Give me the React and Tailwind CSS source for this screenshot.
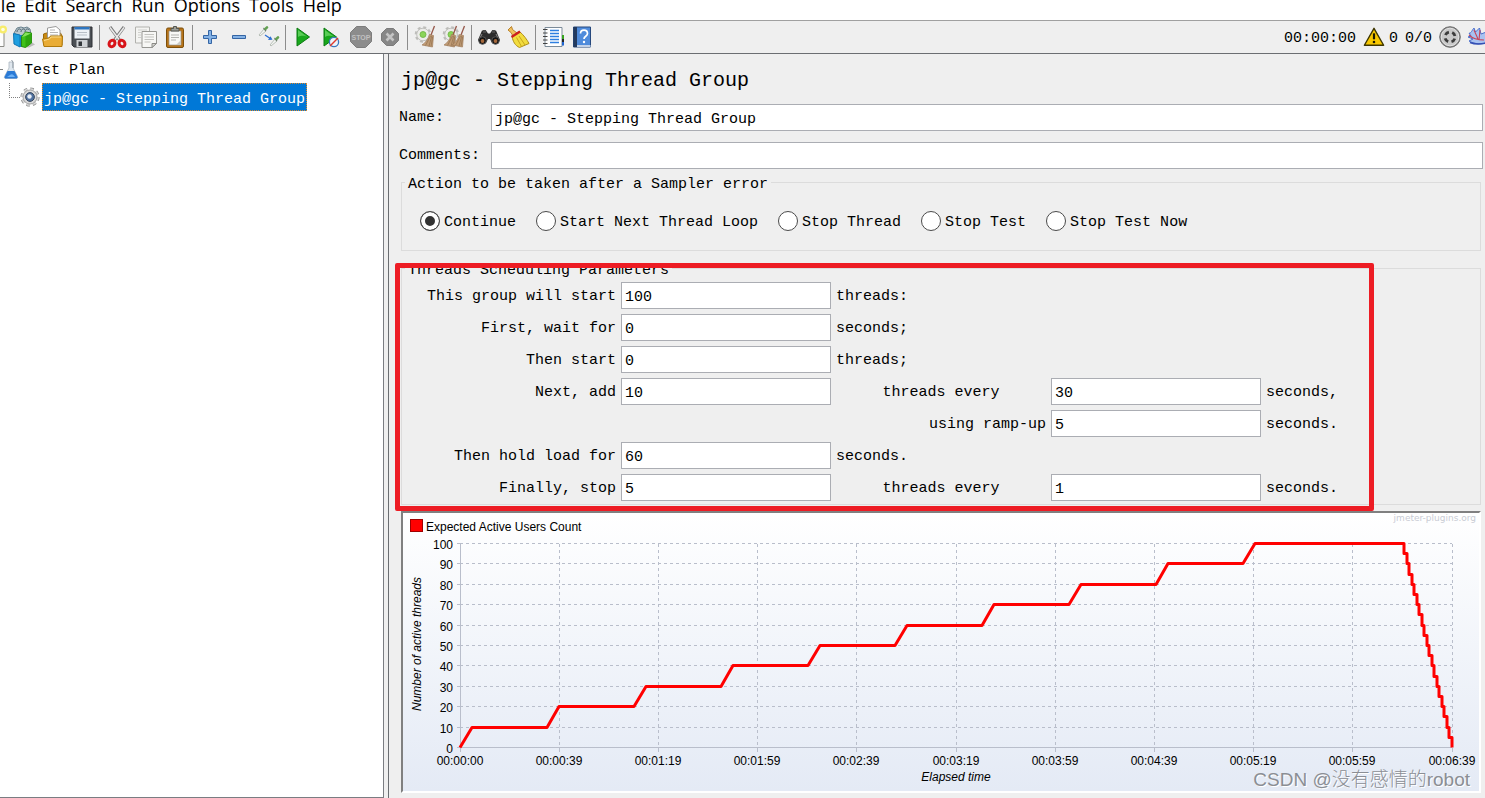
import React from "react";

const mono = "font-['Liberation_Mono',monospace]";

const MENUS = ["File", "Edit", "Search", "Run", "Options", "Tools", "Help"];

function Icon({ children, size = 24 }) {
  return (
    <svg width={size} height={size} viewBox="0 0 24 24" fill="none" aria-hidden="true">
      {children}
    </svg>
  );
}

const NewIcon = () => (
  <Icon>
    <path d="M3 2.500h18v19H3z" fill="#fdfdfd" stroke="#8b8b86" />
    <circle cx="20" cy="4.500" r="4" fill="#f7ec6b" />
    <circle cx="20" cy="4.500" r="1.800" fill="#fffde0" />
  </Icon>
);

const TemplatesIcon = () => (
  <Icon>
    <path d="M2 8 5 3l4-1 3 1 3-1 3 2 1 6-8 4z" fill="#b9c6cc" stroke="#68808c" />
    <path d="M5 7c0-3 3-4 4-2M9 7c0-3 3-4 4-2M13 7c0-3 3-4 4-2" stroke="#4c626e" />
    <path d="M1.500 8.500 8 10v12l-6-3z" fill="#1e9fe0" stroke="#0f75b4" />
    <path d="M8 10h3v12H8z" fill="#1583c4" />
    <path d="m18 16 5 3.500-6 3-4-.5z" fill="#8a8a8a" opacity=".5" />
    <path d="m9.500 11.500 4-4.500 6 1v10l-6 4.500-4-1z" fill="#3fc11a" stroke="#2a8a10" />
    <path d="m13.500 10.500 6-2.500v10l-6 4.500z" fill="#2da60f" />
    <path d="m10 12 3.500-4.500 5.500 1-5.500 2.500z" fill="#86e35e" />
  </Icon>
);

const OpenIcon = () => (
  <Icon>
    <path d="M2.500 20V9l3-1h14l1.500 3v9z" fill="#c98a12" stroke="#9c6a08" />
    <path d="M6.500 3 15 1.500 19 5v8H6.500z" fill="#fff" stroke="#9a9a9a" />
    <path d="M9 5h5M9 7.500h8M9 10h8" stroke="#b5b5b5" />
    <path d="M1.500 14 8 13l1.500-2h12L21 21.500H3z" fill="#e9ac35" stroke="#b07a0c" />
    <path d="M3 15.500 8.500 14l1.500-2h10" stroke="#fbdc8b" />
  </Icon>
);

const SaveIcon = () => (
  <Icon>
    <path d="M2 2h20v20H4l-2-2z" fill="#4b4f54" stroke="#2e3134" />
    <path d="M4.500 2.500h15v11h-15z" fill="#eef2f6" />
    <path d="M4.500 2h15v2.500h-15z" fill="#2e76c0" />
    <path d="M7 7.500h10M7 10h10" stroke="#b8bfc7" />
    <path d="M6.500 15h11v7h-11z" fill="#cfd2d5" />
    <path d="M8.500 16.500H12V21H8.500z" fill="#33373b" />
  </Icon>
);

const CutIcon = () => (
  <Icon>
    <path d="m5 2 9.500 13" stroke="#777" strokeWidth="3" />
    <path d="m19 2-9.500 13" stroke="#777" strokeWidth="3" />
    <path d="m5 2.500 9 12M19 2.500l-9 12" stroke="#e9e9e9" strokeWidth="1.500" />
    <ellipse cx="7" cy="18.500" rx="2.800" ry="3.300" stroke="#d81419" strokeWidth="3" transform="rotate(35 7 18.500)" />
    <ellipse cx="17" cy="18.500" rx="2.800" ry="3.300" stroke="#d81419" strokeWidth="3" transform="rotate(-35 17 18.500)" />
  </Icon>
);

const CopyIcon = () => (
  <Icon>
    <path d="M1.500 2h14v16h-14z" fill="#f4f4f2" stroke="#b1b1ad" />
    <path d="M4 5h9M4 7.500h3M4 10h3M4 12.500h3" stroke="#cfcfcc" />
    <path d="M8 6.500h14.500v12L18 22.500H8z" fill="#f7f7f5" stroke="#969692" />
    <path d="M10.500 9.500h9.500M10.500 12h9.500M10.500 14.500h9.500M10.500 17h6" stroke="#c3c3bf" />
    <path d="M22.500 18.500H18v4z" fill="#d6d6d2" stroke="#8b8b87" />
  </Icon>
);

const PasteIcon = () => (
  <Icon>
    <rect x="3.500" y="3" width="17" height="19.500" rx="1.500" fill="#b7741a" stroke="#7d4f0b" />
    <path d="M6 6h12v14H6z" fill="#f8f8f6" stroke="#9a9a92" strokeWidth=".7" />
    <path d="M8 10h8M8 12.500h8M8 15h5" stroke="#b4b4b0" />
    <path d="M18 15v5h-5z" fill="#c9c9c4" />
    <path d="M8 6V3.500h2.500V1.500h3v2H16V6z" fill="#9b9e98" stroke="#555753" />
  </Icon>
);

const PlusIcon = () => (
  <Icon>
    <path d="M10.500 5.500h3v5h5v3h-5v5h-3v-5h-5v-3h5z" fill="#84b2e6" stroke="#3465a4" />
  </Icon>
);

const MinusIcon = () => (
  <Icon>
    <path d="M5.500 10.500h13v3h-13z" fill="#84b2e6" stroke="#3465a4" />
  </Icon>
);

const Pipette = ({ x, y }) => (
  <g transform={`translate(${x} ${y})`}>
    <path d="m1 9 5-6 2 2-6 5z" fill="#f2f5f2" stroke="#a9b2a9" strokeWidth=".8" />
    <path d="m5.500 2 2.500 3" stroke="#6b7a6b" strokeWidth="1.200" />
    <path d="m7.500 2.800 1.500-1.500" stroke="#62a052" strokeWidth="2.600" strokeLinecap="round" />
  </g>
);

const ToggleIcon = () => (
  <Icon>
    <Pipette x={2} y={1} />
    <path d="m9 10 6 4" stroke="#2d6fd2" strokeWidth="1.300" />
    <path d="m16.500 14.800-4.500.2 2.500-3.700z" fill="#2d6fd2" />
    <Pipette x={13} y={11} />
  </Icon>
);

const StartIcon = () => (
  <Icon>
    <path d="M6 3v18l12.500-9z" fill="#18a81c" stroke="#0d7a12" />
    <path d="M7 5v7c4-2 7-1 9.500 0z" fill="#5acd57" />
  </Icon>
);

const StartNoPauseIcon = () => (
  <Icon>
    <path d="M4 3v18l12.500-9z" fill="#18a81c" stroke="#0d7a12" />
    <path d="M5 5v7c4-2 7-1 9.500 0z" fill="#5acd57" />
    <circle cx="14" cy="17" r="4.600" fill="#eef4fb" stroke="#3a78bf" strokeWidth="1.300" />
    <path d="m10 21 8-8" stroke="#e03a2c" strokeWidth="1.500" />
  </Icon>
);

const StopIcon = () => (
  <Icon>
    <path d="M7.500 1.500h9l6 6v9l-6 6h-9l-6-6v-9z" fill="#8c8c8c" stroke="#7c7c7c" />
    <text x="12" y="14.500" textAnchor="middle" fontSize="7" fontWeight="700" fill="#c0c0c0" fontFamily="Liberation Sans, sans-serif">
      STOP
    </text>
  </Icon>
);

const ShutdownIcon = () => (
  <Icon>
    <path d="M8.500 3.500h7l5 5v7l-5 5h-7l-5-5v-7z" fill="#878787" stroke="#7b7b7b" />
    <path d="m8.500 8.500 7 7m0-7-7 7" stroke="#c4c4c4" strokeWidth="2.600" />
  </Icon>
);

const Gear = ({ x, y }) => (
  <g transform={`translate(${x} ${y})`}>
    <circle r="7" stroke="#bdbdba" strokeWidth="2.600" strokeDasharray="2.900 2.600" />
    <circle r="6.300" fill="#ecece9" stroke="#c0c0bd" />
    <circle r="3" fill="#8ad458" stroke="#6bb33f" strokeWidth=".8" />
  </g>
);

const Broom = ({ x }) => (
  <g transform={`translate(${x} 0)`}>
    <path d="M12.500 1 9 10" stroke="#96584a" strokeWidth="1.300" />
    <path d="m7.500 9.500 4 1-1 11.500L0 20c4-2.500 6-6 7.500-10.500z" fill="#c09b75" stroke="#a07c5b" strokeWidth=".7" />
    <path d="M8.500 11 3.500 20.500M9.700 11 7 21.300M10.700 11.500 9 21.500" stroke="#8c6a47" strokeWidth=".6" />
  </g>
);

const ClearIcon = () => (
  <Icon>
    <Gear x={10} y={9.5} />
    <Broom x={9} />
  </Icon>
);

const ClearAllIcon = () => (
  <Icon>
    <Gear x={9} y={9.5} />
    <Broom x={2} />
    <Broom x={10} />
  </Icon>
);

const SearchIcon = () => (
  <Icon>
    <path d="M5 5.500h4l2 3h2l2-3h4l4 9.500-3 4-5-1-2-4h-2l-2 4-5 1-3-4z" fill="#2c2c2c" />
    <path d="M6 5h3v3H6zM15 5h3v3h-3z" fill="#4a4a4a" />
    <path d="m5 9-2 4M19 9l2 4" stroke="#8a8a8a" />
    <circle cx="5.500" cy="15.500" r="3.800" fill="#141414" stroke="#555" />
    <circle cx="18.500" cy="15.500" r="3.800" fill="#141414" stroke="#555" />
    <circle cx="5.500" cy="16" r="1.900" fill="#a5683c" />
    <circle cx="18.500" cy="16" r="1.900" fill="#a5683c" />
  </Icon>
);

const ResetSearchIcon = () => (
  <Icon>
    <path d="m2 5 3.500-3.500 1 3 4.500 3.500-4 3L5 7.500z" fill="#f0bf5e" stroke="#b9822a" />
    <path d="M6 11.500 13.500 6.500c4 3.500 7.500 8 9.500 12l-9.500 4c-4.500-2-6.500-6-7.500-11z" fill="#f2dc3e" stroke="#b0901a" />
    <path d="m10.500 12.500 5 9M13 11l6 9" stroke="#c9a61c" />
    <path d="m5.500 12 8.500-5.500" stroke="#cc1f1f" strokeWidth="2.400" />
  </Icon>
);

const LogIcon = () => (
  <Icon>
    <path d="M4 2.500h17v19H4z" fill="#fff" stroke="#7c8b99" />
    <path d="M9 5.500h9M9 8.500h9M9 11.500h9M9 14.500h9M9 17.500h9" stroke="#2e7fe0" strokeWidth="1.400" />
    <path d="M2 4.500h4.500M2 8h4.500M2 11.500h4.500M2 15h4.500M2 18.500h4.500" stroke="#444" />
    <path d="M21 10h2v4h-2z" fill="#37a51f" />
    <path d="M21 14h2v3h-2z" fill="#222" />
    <path d="M21 17h2v3.500h-2z" fill="#2166d1" />
  </Icon>
);

const HelpIcon = () => (
  <Icon>
    <path d="M3.500 2h17v20h-17z" fill="#4f8bdb" stroke="#26487c" />
    <path d="M3.500 2H7v20H3.500z" fill="#233a5e" />
    <path d="M7 20h13.500v2H7z" fill="#c3d2e8" />
    <path d="M10.500 8.500c0-4.500 7-4.500 7 0 0 3-3.500 2.500-3.500 5.500" stroke="#fff" strokeWidth="1.700" />
    <circle cx="14" cy="17" r="1.200" fill="#fff" />
  </Icon>
);

const WarningIcon = () => (
  <Icon size={22}>
    <path d="M12 2.500 22.500 21h-21z" fill="#f8c800" stroke="#3d3500" strokeWidth="1.500" strokeLinejoin="round" />
    <path d="M12 8v6.500" stroke="#1f1b00" strokeWidth="2.400" />
    <circle cx="12" cy="17.500" r="1.400" fill="#1f1b00" />
  </Icon>
);

const RemoteIcon = () => (
  <Icon>
    <circle cx="12" cy="12" r="10.300" fill="#8d8d8d" stroke="#6c6c6c" />
    <circle cx="12" cy="12" r="8.800" fill="#c9c9c9" stroke="#e3e3e3" />
    <circle cx="12" cy="12" r="5" stroke="#3c3c3c" strokeWidth="2.800" strokeDasharray="4.400 3.450" strokeDashoffset="-1.700" />
  </Icon>
);

const FeatherIcon = () => (
  <Icon>
    <path d="M3 8c2 1 3-3 5-5l1.500 4 4-4 1.500 6 8-3v11c-8 3-15 2-20-1l4-2-5-2 3-1z" fill="#a9c2f0" stroke="#4a6ecb" />
    <path d="M3 10c4 4 8 5 15 5M8 5l4 9M14 5l-1 10" stroke="#c8455a" strokeWidth="1.100" />
    <path d="M4 17.500c5 2 11 2 18 0" stroke="#3550b4" strokeWidth="1.600" />
  </Icon>
);

const FlaskIcon = () => (
  <svg width="16" height="20" viewBox="0 0 16 20" fill="none" aria-hidden="true">
    <path d="M6 3v6l-4.500 8.500c-.5 1 0 2 1.500 2h10c1.500 0 2-1 1.500-2L10 9V3z" fill="#dfe7ee" stroke="#a9b5bf" strokeWidth=".8" />
    <path d="M4.500 12h7l3 6c0 1-.5 1.500-1.500 1.500H3c-1 0-1.500-.5-1.500-1.500z" fill="#2a7ad6" />
    <path d="M7 16c2-2 4 0 5 2H4z" fill="#6cb0f5" />
    <path d="m8.500 1 1.500 2v6" stroke="#8e99a3" />
  </svg>
);

const ThreadGroupIcon = () => (
  <svg width="20" height="20" viewBox="0 0 20 20" fill="none" aria-hidden="true">
    <circle cx="10" cy="10" r="8.300" stroke="#8f8f8f" strokeWidth="2.600" strokeDasharray="3.500 3.020" />
    <circle cx="10" cy="10" r="8" stroke="#dcdcdc" strokeWidth="1.600" strokeDasharray="3 3.280" />
    <circle cx="10" cy="10" r="7" fill="#dadada" stroke="#a4a4a4" />
    <circle cx="10" cy="10" r="4.400" fill="#50719f" stroke="#39475c" />
    <circle cx="9.500" cy="9.500" r="2.200" fill="#e7eef7" />
  </svg>
);

const TOOLS = [
  ["New", NewIcon],
  ["Templates", TemplatesIcon],
  ["Open", OpenIcon],
  ["Save", SaveIcon],
  null,
  ["Cut", CutIcon],
  ["Copy", CopyIcon],
  ["Paste", PasteIcon],
  null,
  ["Expand all", PlusIcon],
  ["Collapse all", MinusIcon],
  ["Toggle", ToggleIcon],
  null,
  ["Start", StartIcon],
  ["Start no pauses", StartNoPauseIcon],
  ["Stop", StopIcon],
  ["Shutdown", ShutdownIcon],
  null,
  ["Clear", ClearIcon],
  ["Clear all", ClearAllIcon],
  null,
  ["Find", SearchIcon],
  ["Reset search", ResetSearchIcon],
  null,
  ["Function helper", LogIcon],
  ["Help", HelpIcon],
];

function Toolbar() {
  return (
    <div className="flex h-[34px] items-center justify-between overflow-hidden border-t border-b border-t-[#a0a0a0] border-b-[#6b6e72] bg-[#efefef]">
      <div className="-ml-[20px] flex items-center">
        {TOOLS.map((tool, i) => {
          if (!tool) {
            return (
              <span key={i} className="flex w-[6px] justify-center">
                <span className="h-[25px] w-px bg-[#8c8c8c]" />
              </span>
            );
          }
          const [label, Glyph] = tool;
          return (
            <button key={i} type="button" aria-label={label} className="flex w-[29px] justify-center">
              <Glyph />
            </button>
          );
        })}
      </div>
      <div className="-mr-[5px] flex items-center text-[15px] text-black">
        <span className="pt-1">00:00:00</span>
        <button type="button" aria-label="Show log" className="mr-1 ml-[7px]">
          <WarningIcon />
        </button>
        <span className="pt-1">0</span>
        <span className="mr-[6px] ml-[7px] pt-1">0/0</span>
        <RemoteIcon />
        <span className="ml-1">
          <FeatherIcon />
        </span>
      </div>
    </div>
  );
}

function Tree() {
  return (
    <aside className="w-[384px] shrink-0 border-r border-b border-[#7a7d82] bg-white pt-px text-[15px]">
      <ul>
        <li>
          <div className="flex h-[28px] items-center">
            <span className="mr-px w-[2px] border-t border-dotted border-[#808080]" />
            <FlaskIcon />
            <span className="ml-[5px] pt-[5px]">Test Plan</span>
          </div>
          <ul>
            <li className="flex h-[28px] items-center pl-[9px]">
              <span className="h-[15px] w-[11px] self-start border-b border-l border-dotted border-[#808080]" />
              <ThreadGroupIcon />
              <button
                type="button"
                className="ml-[2px] h-[28px] border border-dotted border-[#e08a2c] bg-[#0078d7] px-px pt-[5px] text-white"
              >
                jp@gc - Stepping Thread Group
              </button>
            </li>
          </ul>
        </li>
      </ul>
    </aside>
  );
}

const inputClass =
  "h-[27px] min-w-0 border border-[#abadb3] bg-white px-[3px] pt-[3px] text-[15px] text-black outline-none";

const ACTIONS = ["Continue", "Start Next Thread Loop", "Stop Thread", "Stop Test", "Stop Test Now"];

function Group({ title, children }) {
  return (
    <fieldset className="min-w-0 border border-[#dcdcdc]">
      <legend className="ml-[3px] px-[3px] pt-[6px] leading-[14px]">{title}</legend>
      {children}
    </fieldset>
  );
}

function Num({ id, value }) {
  return <input id={id} defaultValue={value} className={inputClass} />;
}

function Schedule() {
  return (
    <div className="grid grid-cols-[214px_210px_210px_210px_auto] items-center gap-[5px] pt-1 pb-[3px] [&>label]:pt-1 [&>span]:pt-1">
      <label htmlFor="start" className="text-right">This group will start</label>
      <Num id="start" value="100" />
      <span className="col-span-3">threads:</span>

      <label htmlFor="wait" className="text-right">First, wait for</label>
      <Num id="wait" value="0" />
      <span className="col-span-3">seconds;</span>

      <label htmlFor="then" className="text-right">Then start</label>
      <Num id="then" value="0" />
      <span className="col-span-3">threads;</span>

      <label htmlFor="add" className="text-right">Next, add</label>
      <Num id="add" value="10" />
      <label htmlFor="addEvery" className="text-center">threads every</label>
      <Num id="addEvery" value="30" />
      <span>seconds,</span>

      <label htmlFor="ramp" className="col-start-3 text-right">using ramp-up</label>
      <Num id="ramp" value="5" />
      <span>seconds.</span>

      <label htmlFor="hold" className="text-right">Then hold load for</label>
      <Num id="hold" value="60" />
      <span className="col-span-3">seconds.</span>

      <label htmlFor="stop" className="text-right">Finally, stop</label>
      <Num id="stop" value="5" />
      <label htmlFor="stopEvery" className="text-center">threads every</label>
      <Num id="stopEvery" value="1" />
      <span>seconds.</span>
    </div>
  );
}

const TIMES = [
  "00:00:00", "00:00:39", "00:01:19", "00:01:59", "00:02:39", "00:03:19",
  "00:03:59", "00:04:39", "00:05:19", "00:05:59", "00:06:39",
];

const PLOT = { left: 57, right: 1049, top: 30.5, bottom: 234.5 };
const yOf = (v) => Math.floor(PLOT.bottom - ((PLOT.bottom - PLOT.top) * v) / 100) + 0.5;
const xOf = (i) => Math.floor(PLOT.left + ((PLOT.right - PLOT.left) * i) / 10) + 0.5;

function seriesPoints() {
  const pts = [[57, yOf(0)]];
  for (let k = 1; k <= 10; k++) {
    const x = 57 + (k - 1) * 87;
    pts.push([x + 12, yOf(k * 10)]);
    pts.push([k < 10 ? x + 87 : 1001, yOf(k * 10)]);
  }
  for (let k = 1; k <= 20; k++) {
    const x = 1001 + Math.round((k - 1) * 2.5);
    pts.push([x, yOf(100 - k * 5)]);
    if (k < 20) pts.push([1001 + Math.round(k * 2.5), yOf(100 - k * 5)]);
  }
  return pts.map((p) => p.join(",")).join(" ");
}

function Chart() {
  return (
    <div className="relative border-2 border-t-[#808080] border-r-white border-b-white border-l-[#808080] bg-linear-to-b from-white to-[#e4eaf5]">
      <svg
        viewBox="0 0 1076 278"
        className="block w-full"
        role="img"
        aria-label="Expected Active Users Count"
        fontFamily="Liberation Sans, Arial, sans-serif"
        fontSize="12"
      >
        <rect x="7.500" y="6.500" width="12" height="12" fill="#f00" stroke="#a00000" />
        <text x="23" y="18">Expected Active Users Count</text>
        <text x="1073" y="8" textAnchor="end" fontSize="9" fill="#c9ccd4" fontFamily="DejaVu Sans, sans-serif">
          jmeter-plugins.org
        </text>
        <g stroke="#b9becb" fill="none" shapeRendering="crispEdges">
          {TIMES.map((t, i) => (
            <g key={t}>
              {i > 0 && <path d={`M${xOf(i)} 30.500V234.500`} strokeDasharray="3 3" />}
              <path d={`M${xOf(i)} 234.500v4`} />
            </g>
          ))}
          {TIMES.map((t, i) => (
            <g key={t}>
              {i > 0 && <path d={`M57 ${yOf(i * 10)}H1049`} strokeDasharray="3 3" />}
              <path d={`M53.500 ${yOf(i * 10)}h4`} />
            </g>
          ))}
          <path d="M57.500 30.500V234.500H1049" />
        </g>
        {TIMES.map((t, i) => (
          <g key={t}>
            <text x={xOf(i) - 0.5} y="252" textAnchor="middle">{t}</text>
            <text x="50" y={yOf(i * 10) + 5} textAnchor="end">{i * 10}</text>
          </g>
        ))}
        <text x="553" y="268" textAnchor="middle" fontStyle="italic">Elapsed time</text>
        <text transform="translate(18 131) rotate(-90)" textAnchor="middle" fontStyle="italic">
          Number of active threads
        </text>
        <polyline points={seriesPoints()} fill="none" stroke="#f00" strokeWidth="3" strokeLinejoin="round" />
      </svg>
      <span className="absolute right-[9px] bottom-px font-['Liberation_Sans','Noto_Sans_CJK_SC',sans-serif] text-[19px] leading-5 font-light whitespace-nowrap text-[#8b8e94] [text-shadow:1px_1px_0_#ffffff]">
        CSDN @没有感情的robot
      </span>
    </div>
  );
}

export default function App() {
  return (
    <div className={`flex min-h-screen flex-col overflow-hidden bg-[#efefef] text-black ${mono}`}>
      <nav className="flex h-[20px] items-end overflow-hidden bg-white">
        <div className="-ml-[13px] flex gap-[9px] pb-px font-['Open_Sans',sans-serif] text-[18px] leading-[28px]">
          {MENUS.map((m) => (
            <button key={m} type="button">
              {m}
            </button>
          ))}
        </div>
      </nav>
      <Toolbar />
      <div className="flex flex-1">
        <Tree />
        <main className="ml-1 min-w-0 flex-1 border-l border-[#6b6e72] pb-[5px] text-[15px]">
          <h1 className="pt-1 pl-3 text-[20px] leading-[46px]">jp@gc - Stepping Thread Group</h1>
          <div className="grid grid-cols-[92px_1fr] items-center gap-y-[11px] pr-[2px] pl-[10px]">
            <label htmlFor="name" className="pt-[2px]">Name:</label>
            <input id="name" defaultValue="jp@gc - Stepping Thread Group" className={inputClass} />
            <label htmlFor="comments" className="pt-[2px]">Comments:</label>
            <input id="comments" className={inputClass} />
          </div>
          <div className="mt-[3px] mr-1 ml-3">
            <Group title="Action to be taken after a Sampler error">
              <div className="flex flex-wrap gap-x-5 py-[19px] pl-[18px]">
                {ACTIONS.map((a, i) => (
                  <label key={a} className="flex h-5 items-center gap-1">
                    <input
                      type="radio"
                      name="action"
                      defaultChecked={i === 0}
                      className="size-5 appearance-none rounded-full border border-[#4a4a4a] bg-white shadow-[inset_0_0_0_4px_#ffffff] checked:bg-[#333333]"
                    />
                    <span className="pt-1">{a}</span>
                  </label>
                ))}
              </div>
            </Group>
            <div className="relative mt-[7px]">
              <Group title="Threads Scheduling Parameters">
                <Schedule />
              </Group>
              <div className="pointer-events-none absolute top-[5px] -bottom-[6px] -left-[6px] z-10 w-[979px] rounded-[2px] border-[5px] border-[#ed1c24]" />
            </div>
            <div className="mt-[6px]">
              <Chart />
            </div>
          </div>
        </main>
      </div>
    </div>
  );
}
